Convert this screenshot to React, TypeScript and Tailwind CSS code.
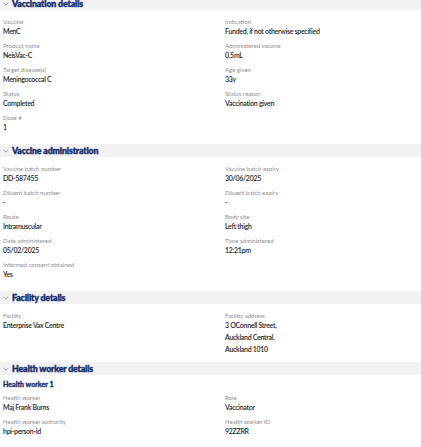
import React from "react";

type Item = { label: string; value: string[] };

const Chevron = () => (
  <svg width="6" height="4" viewBox="0 0 6 4" className="mr-[3px] shrink-0">
    <path d="M0.6 0.8 L3 3.2 L5.4 0.8" fill="none" stroke="#7a8aa8" strokeWidth="0.8" />
  </svg>
);

const Header = ({ title, first }: { title: string; first?: boolean }) => (
  <div
    className={`flex items-center h-[13px] bg-[#f2f2f2] pl-[3px] ${first ? "-mt-[3px]" : ""}`}
  >
    <Chevron />
    <span className="text-[8.8px] leading-[13px] font-black tracking-[-0.15px] text-[#132d6b] [-webkit-text-stroke:0.4px_#132d6b]">
      {title}
    </span>
  </div>
);

const Field = ({ item }: { item: Item }) => (
  <div className="mb-[5px]">
    <div className="text-[6px] leading-[7px] text-[#8c8c8c]">{item.label}</div>
    {item.value.map((v, i) => (
      <div
        key={i}
        className="text-[7px] leading-[12px] font-semibold tracking-[-0.3px] text-[#262626]"
      >
        {v}
      </div>
    ))}
  </div>
);

const Section = ({
  title,
  left,
  right,
  first,
  sub,
  tight,
}: {
  title: string;
  left: Item[];
  right: Item[];
  first?: boolean;
  sub?: string;
  tight?: boolean;
}) => (
  <div>
    <Header title={title} first={first} />
    {sub && (
      <div className="pl-[3px] pt-[4px] text-[7px] leading-[10px] font-black text-[#132d6b] [-webkit-text-stroke:0.3px_#132d6b]">
        {sub}
      </div>
    )}
    <div
      className={`grid grid-cols-[222px_1fr] px-[3px] ${sub ? "pt-[5px]" : "pt-[8px]"} ${
        tight ? "pb-[2px]" : "pb-[6px]"
      }`}
    >
      <div>
        {left.map((it) => (
          <Field key={it.label} item={it} />
        ))}
      </div>
      <div>
        {right.map((it) => (
          <Field key={it.label} item={it} />
        ))}
      </div>
    </div>
  </div>
);

export default function App() {
  return (
    <div
      className="w-[421px] h-[447px] overflow-hidden bg-white"
      style={{ fontFamily: "Lato, 'Open Sans', sans-serif" }}
    >
      <Section
        first
        title="Vaccination details"
        left={[
          { label: "Vaccine", value: ["MenC"] },
          { label: "Product name", value: ["NeisVac-C"] },
          { label: "Target disease(s)", value: ["Meningococcal C"] },
          { label: "Status", value: ["Completed"] },
          { label: "Dose #", value: ["1"] },
        ]}
        right={[
          { label: "Indication", value: ["Funded, if not otherwise specified"] },
          { label: "Administered volume", value: ["0.5mL"] },
          { label: "Age given", value: ["33y"] },
          { label: "Status reason", value: ["Vaccination given"] },
        ]}
      />
      <Section
        title="Vaccine administration"
        left={[
          { label: "Vaccine batch number", value: ["DD-587455"] },
          { label: "Diluent batch number", value: ["-"] },
          { label: "Route", value: ["Intramuscular"] },
          { label: "Date administered", value: ["05/02/2025"] },
          { label: "Informed consent obtained", value: ["Yes"] },
        ]}
        right={[
          { label: "Vaccine batch expiry", value: ["30/06/2025"] },
          { label: "Diluent batch expiry", value: ["-"] },
          { label: "Body site", value: ["Left thigh"] },
          { label: "Time administered", value: ["12:21pm"] },
        ]}
      />
      <Section
        tight
        title="Facility details"
        left={[{ label: "Facility", value: ["Enterprise Vax Centre"] }]}
        right={[
          {
            label: "Facility address",
            value: ["3 OConnell Street,", "Auckland Central,", "Auckland 1010"],
          },
        ]}
      />
      <Section
        title="Health worker details"
        sub="Health worker 1"
        left={[
          { label: "Health worker", value: ["Maj Frank Burns"] },
          { label: "Health worker authority", value: ["hpi-person-id"] },
        ]}
        right={[
          { label: "Role", value: ["Vaccinator"] },
          { label: "Health worker ID", value: ["92ZZRR"] },
        ]}
      />
    </div>
  );
}
